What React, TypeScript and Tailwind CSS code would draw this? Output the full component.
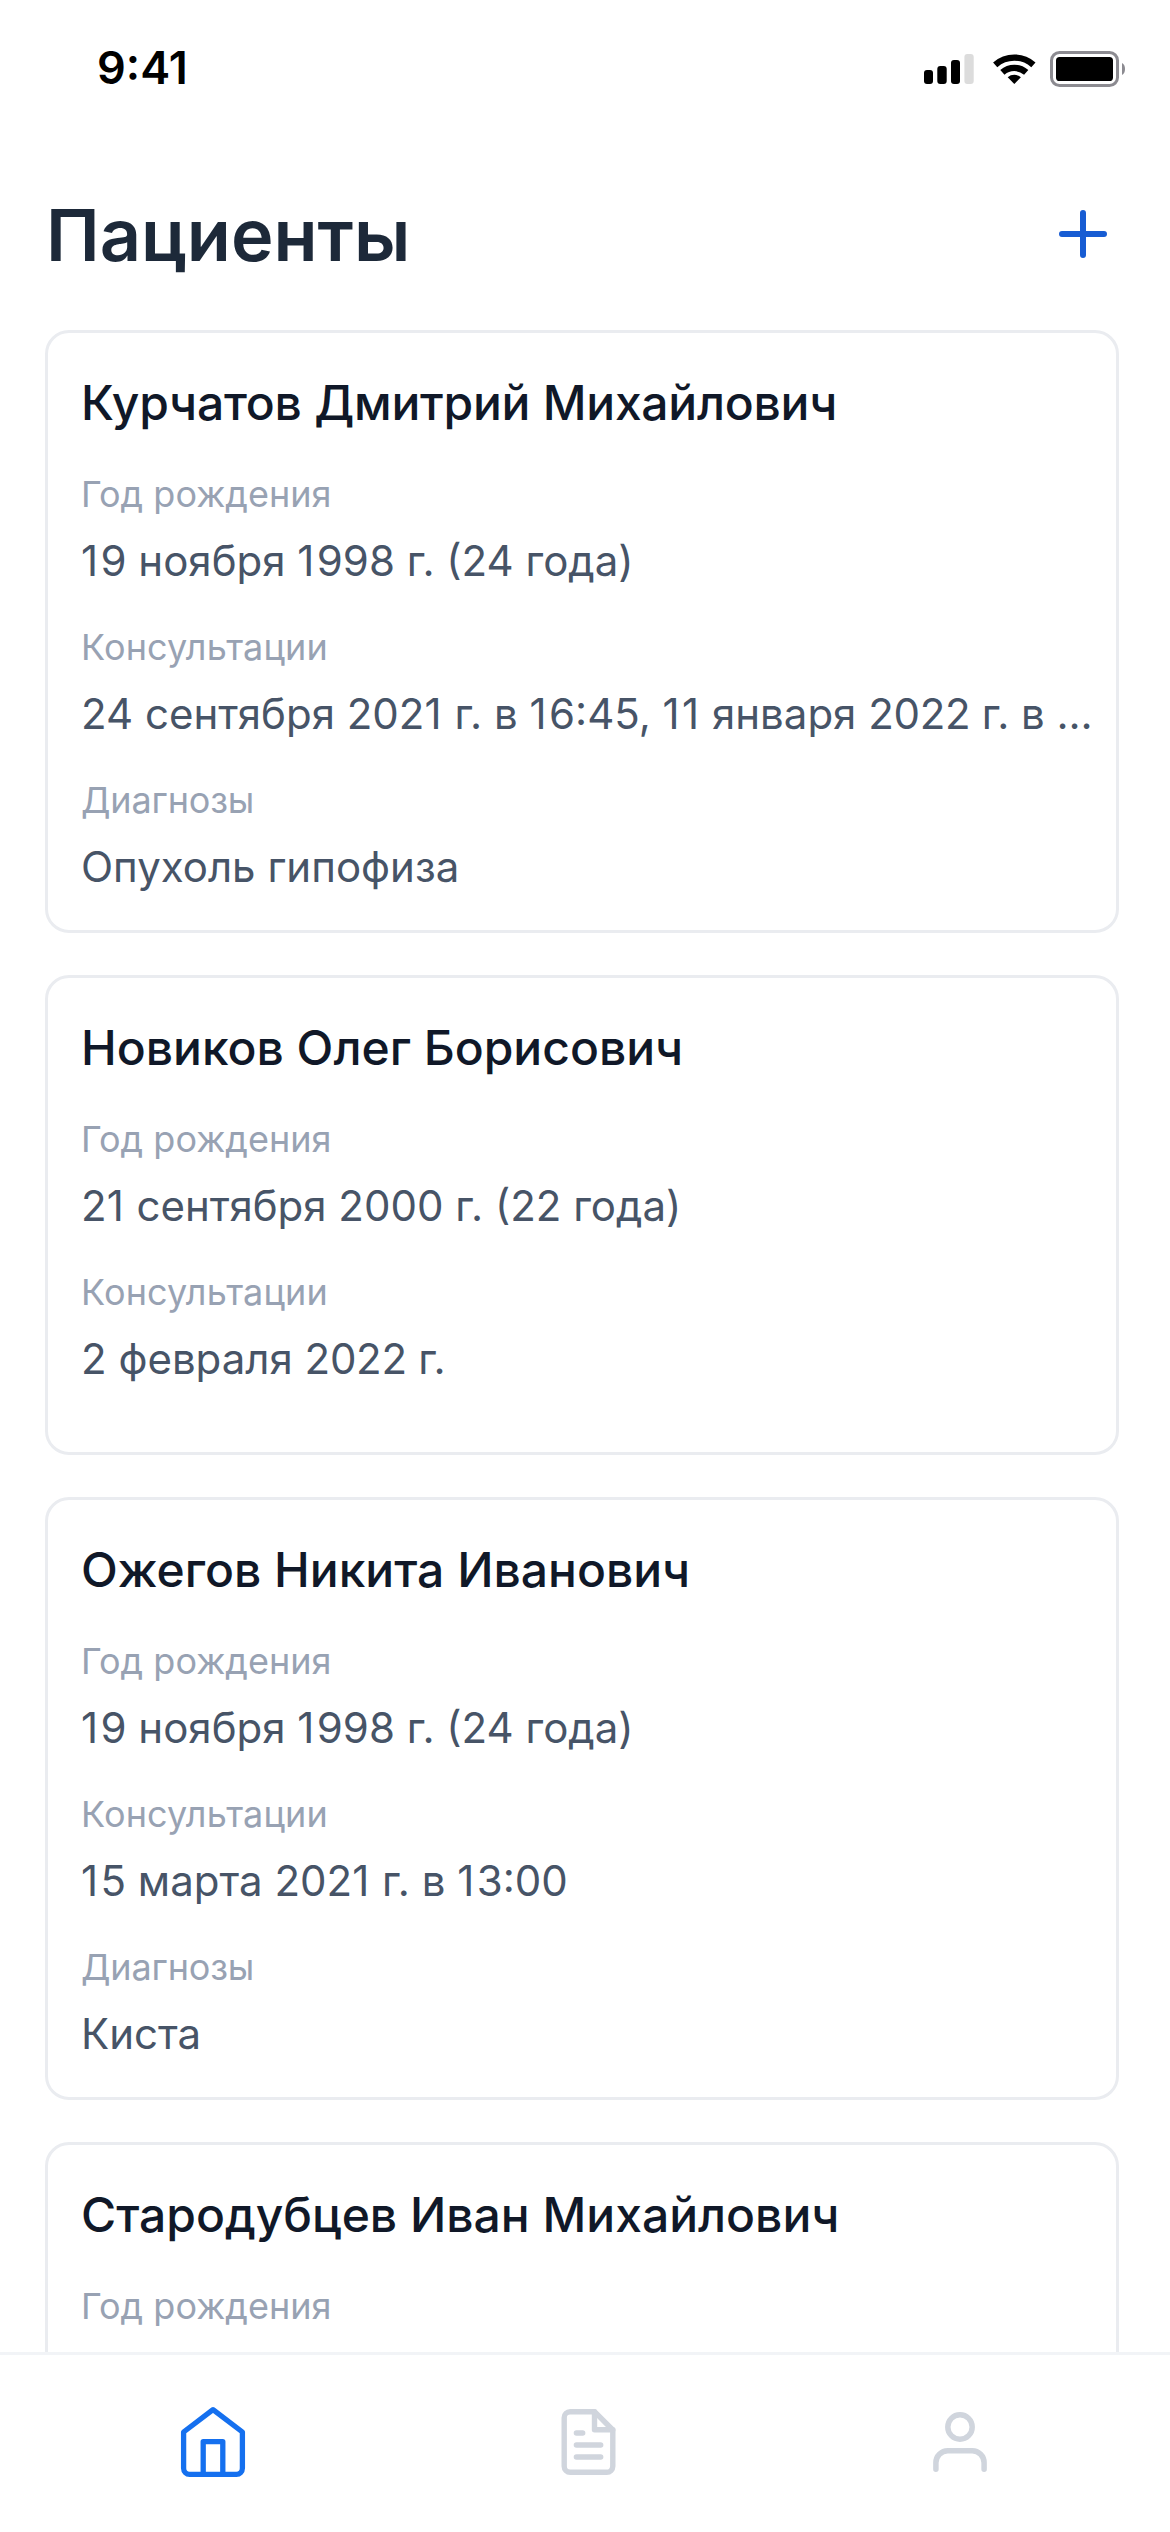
import React from "react";

type Field = { label: string; value?: string };
type Patient = { name: string; fields: Field[] };

const patients: Patient[] = [
  {
    name: "Курчатов Дмитрий Михайлович",
    fields: [
      { label: "Год рождения", value: "19 ноября 1998 г. (24 года)" },
      { label: "Консультации", value: "24 сентября 2021 г. в 16:45, 11 января 2022 г. в ..." },
      { label: "Диагнозы", value: "Опухоль гипофиза" },
    ],
  },
  {
    name: "Новиков Олег Борисович",
    fields: [
      { label: "Год рождения", value: "21 сентября 2000 г. (22 года)" },
      { label: "Консультации", value: "2 февраля 2022 г." },
    ],
  },
  {
    name: "Ожегов Никита Иванович",
    fields: [
      { label: "Год рождения", value: "19 ноября 1998 г. (24 года)" },
      { label: "Консультации", value: "15 марта 2021 г. в 13:00" },
      { label: "Диагнозы", value: "Киста" },
    ],
  },
  {
    name: "Стародубцев Иван Михайлович",
    fields: [{ label: "Год рождения" }],
  },
];

const nameTracking: Record<string, string> = {
  "Курчатов Дмитрий Михайлович": "tracking-[-0.25px]",
};

const labelTracking: Record<string, string> = {
  Консультации: "tracking-[0.14px]",
  Диагнозы: "tracking-[-0.15px]",
};

/* Evens out the narrow digit "1" and the run of "2022 г." inside dates. */
function DateText({ text }: { text: string }) {
  return (
    <>
      {text.split(/(1(?=\d)|1(?= )|2022 г\.)/).map((part, i, all) => {
        if (part === "2022 г.") return <span key={i} className="tracking-[-0.3px]">{part}</span>;
        if (part === "1") {
          const beforeSpace = (all[i + 1] || "").startsWith(" ");
          return <span key={i} className={beforeSpace ? "tracking-[1px]" : "tracking-[2.4px]"}>{part}</span>;
        }
        return part;
      })}
    </>
  );
}

function StatusBar() {
  return (
    <div className="flex h-[138px] shrink-0 items-start justify-between pr-[45px] pl-[97px]">
      <span className="mt-[41px] text-[45px] leading-[54px] font-semibold text-black">9:41</span>
      <svg className="mt-[48px] h-[42px] w-[201px]" viewBox="924 48 201 42" fill="#000">
        <rect x="924" y="70" width="9" height="14" rx="3" />
        <rect x="937.3" y="66" width="9.4" height="18" rx="3" />
        <rect x="951" y="60" width="9" height="24" rx="3" />
        <rect x="964.4" y="54" width="9.3" height="30" rx="3" fill="#dcdcdc" />
        <g fill="none" stroke="#000" strokeWidth="6.4">
          <path d="M995.2 64.8A29 29 0 0 1 1033.4 64.8" />
          <path d="M1002.4 72.4A18 18 0 0 1 1026.2 72.4" />
        </g>
        <path d="M1014.3 84L1007.7 77.3A10 10 0 0 1 1020.9 77.3Z" />
        <rect x="1051.5" y="52.5" width="66" height="33" rx="8" fill="none" stroke="#8c8b91" strokeWidth="3" />
        <rect x="1056" y="57" width="57" height="24" rx="3.6" />
        <path d="M1122 63C1126 64.5 1126 73.5 1122 75Z" fill="#8c8b91" />
      </svg>
    </div>
  );
}

function PatientCard({ name, fields }: Patient) {
  return (
    <article className="h-[603px] shrink-0 overflow-hidden rounded-[24px] border-[3px] border-[#eaecf0] pt-[34px] pl-[33px]">
      <h2 className={`text-[48px] leading-[72px] font-medium whitespace-nowrap text-[#101828] ${nameTracking[name] ?? ""}`}>{name}</h2>
      <dl className="mt-[28px] flex flex-col gap-[28px]">
        {fields.map((f) => (
          <div key={f.label} className="flex flex-col gap-2">
            <dt className={`text-[36px] leading-[54px] text-[#98a2b3] ${labelTracking[f.label] ?? ""}`}>{f.label}</dt>
            {f.value && (
              <dd className="text-[42px] leading-[63px] whitespace-nowrap text-[#475467]">
                <DateText text={f.value} />
              </dd>
            )}
          </div>
        ))}
      </dl>
    </article>
  );
}

function TabBar() {
  return (
    <nav className="flex h-[180px] shrink-0 items-start justify-between border-t-[3px] border-[#f2f4f7] bg-white pt-[45px] pr-[168px] pl-[171px]">
      <svg className="size-[84px]" viewBox="0 0 84 84" fill="none" stroke="#1570ef" strokeWidth="5.3" strokeLinejoin="round">
        <path d="M12.6 32L42 9.6L71.4 32V68.3A6 6 0 0 1 65.4 74.3H18.6A6 6 0 0 1 12.6 68.3Z" />
        <path d="M32.2 74.3V41.6H51.8V74.3" />
      </svg>
      <svg className="size-[84px]" viewBox="0 0 84 84" fill="none" stroke="#d0d5dd" strokeWidth="5.4" strokeLinecap="round" strokeLinejoin="round">
        <path d="M49.5 11.7H25.2A6 6 0 0 0 19.2 17.7V66.3A6 6 0 0 0 25.2 72.3H61.8A6 6 0 0 0 67.8 66.3V30Z" />
        <path d="M49.5 11.7V29.8H67.8M31.4 33H37.7M31.4 45H55.7M31.4 57H55.7" />
      </svg>
      <svg className="size-[84px]" viewBox="0 0 84 84" fill="none" stroke="#d0d5dd" strokeWidth="5.5" strokeLinecap="round">
        <circle cx="42" cy="27" r="12.2" />
        <path d="M17.9 69.3V62.7A11.9 11.9 0 0 1 29.8 50.8H54.2A11.9 11.9 0 0 1 66.1 62.7V69.3" />
      </svg>
    </nav>
  );
}

export default function App() {
  return (
    <div className="flex h-[2532px] w-[1170px] flex-col overflow-hidden bg-white font-['Inter',sans-serif]">
      <StatusBar />
      <header className="flex h-[192px] shrink-0 items-center justify-between pr-[63px] pl-[46px]">
        <h1 className="pt-[2px] text-[72px] leading-[90px] font-semibold text-[#1d2939]">Пациенты</h1>
        <svg className="size-[48px]" viewBox="0 0 48 48" stroke="#175cd3" strokeWidth="6" strokeLinecap="round">
          <path d="M24 3V45M3 24H45" />
        </svg>
      </header>
      <main className="flex min-h-0 flex-1 flex-col gap-[42px] overflow-hidden pr-[51px] pl-[45px] [&>article:nth-child(2)]:h-[480px]">
        {patients.map((p) => (
          <PatientCard key={p.name} {...p} />
        ))}
      </main>
      <TabBar />
    </div>
  );
}
